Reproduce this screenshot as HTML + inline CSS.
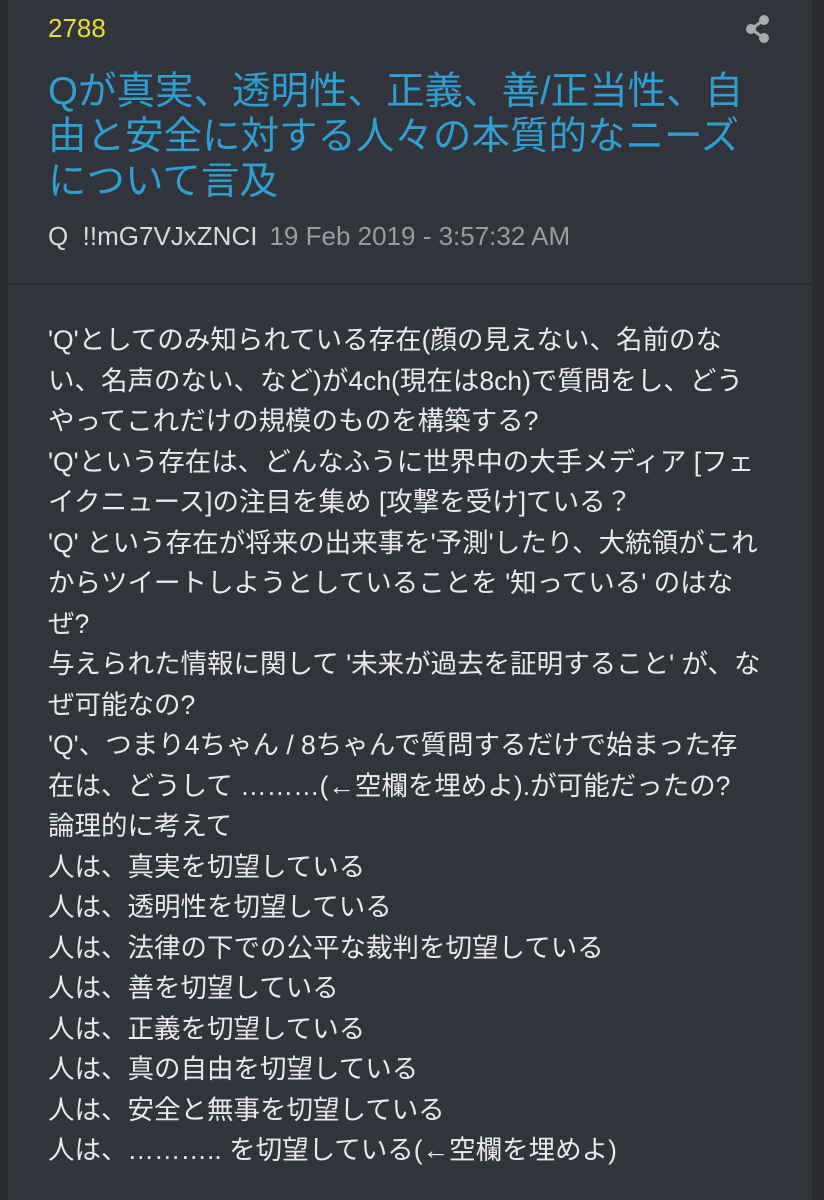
<!DOCTYPE html>
<html><head><meta charset="utf-8">
<style>
html,body{margin:0;padding:0;}
body{width:824px;height:1200px;background:#2a2c31;overflow:hidden;font-family:"Liberation Sans","Noto Sans CJK JP",sans-serif;}
.card{position:absolute;left:8px;top:0;width:804px;height:1200px;background:#32343b;}
.num{position:absolute;left:40px;top:13px;color:#e6dc3a;font-size:26px;}
.share{position:absolute;left:736px;top:14px;}
.title{position:absolute;left:40px;top:69px;color:#2e9fd0;font-size:38.5px;line-height:45px;white-space:nowrap;}
.meta{position:absolute;left:40px;top:221px;font-size:26px;color:#d8d9dc;white-space:nowrap;}
.meta .d{color:#9a9ca2;margin-left:12px;}
.hr{position:absolute;left:0;top:283px;width:804px;height:2px;background:#2a2c31;}
.body{position:absolute;left:40px;top:320px;color:#e8e9ec;font-size:26.5px;line-height:40.5px;white-space:nowrap;}
</style></head><body>
<div class="card">
<div class="num">2788</div>
<svg class="share" width="28" height="30" viewBox="0 0 28 30"><g fill="#a8aaaf" stroke="#a8aaaf"><circle cx="20" cy="6" r="5" stroke="none"/><circle cx="7" cy="15" r="5" stroke="none"/><circle cx="20" cy="24" r="5" stroke="none"/><path d="M20 6L7 15L20 24" stroke-width="3" fill="none"/></g></svg>
<div class="title">Qが真実、透明性、正義、善/正当性、自<br>由と安全に対する人々の本質的なニーズ<br>について言及</div>
<div class="meta">Q&nbsp;&nbsp;!!mG7VJxZNCI<span class="d">19 Feb 2019 - 3:57:32 AM</span></div>
<div class="hr"></div>
<div class="body">'Q'としてのみ知られている存在(顔の見えない、名前のな<br>い、名声のない、など)が4ch(現在は8ch)で質問をし、どう<br>やってこれだけの規模のものを構築する?<br>'Q'という存在は、どんなふうに世界中の大手メディア [フェ<br>イクニュース]の注目を集め [攻撃を受け]ている？<br>'Q' という存在が将来の出来事を'予測'したり、大統領がこれ<br>からツイートしようとしていることを '知っている' のはな<br>ぜ?<br>与えられた情報に関して '未来が過去を証明すること' が、な<br>ぜ可能なの?<br>'Q'、つまり4ちゃん / 8ちゃんで質問するだけで始まった存<br>在は、どうして ………(←空欄を埋めよ).が可能だったの?<br>論理的に考えて<br>人は、真実を切望している<br>人は、透明性を切望している<br>人は、法律の下での公平な裁判を切望している<br>人は、善を切望している<br>人は、正義を切望している<br>人は、真の自由を切望している<br>人は、安全と無事を切望している<br>人は、……….. を切望している(←空欄を埋めよ)</div>
</div>
</body></html>
